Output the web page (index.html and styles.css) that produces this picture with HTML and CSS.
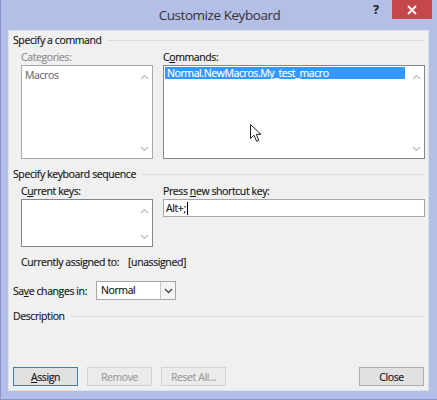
FILE: index.html
```html
<!DOCTYPE html>
<html>
<head>
<meta charset="utf-8">
<link rel="stylesheet" href="styles.css">
</head>
<body>
<div class="window">
  <div class="titlebar">
    <div class="title">Customize Keyboard</div>
    <div class="controls">
      <span class="help">?</span>
      <span class="close"><svg width="10" height="10" viewBox="0 0 10 10"><path d="M1 1L9 9M9 1L1 9" stroke="#fff" stroke-width="1.8"/></svg></span>
    </div>
  </div>
  <div class="panel">
    <div class="section-head"><span>Specify a command</span><i class="rule"></i></div>
    <div class="cmd-grid">
      <div class="col">
        <div class="label disabled">Categories:</div>
        <div class="listbox tall disabled-box">
          <div class="items"><div class="item gray">Macros</div></div>
          <div class="scroll"><svg class="arr" width="9" height="6" viewBox="0 0 9 6"><path d="M1 5L4.5 1.5L8 5" fill="none" stroke="#bdbdbd" stroke-width="1.2"/></svg><svg class="arr" width="9" height="6" viewBox="0 0 9 6"><path d="M1 1L4.5 4.5L8 1" fill="none" stroke="#bdbdbd" stroke-width="1.2"/></svg></div>
        </div>
      </div>
      <div class="col">
        <div class="label">C<u>o</u>mmands:</div>
        <div class="listbox tall">
          <div class="items"><div class="item selected">Normal.NewMacros.My_test_macro</div></div>
          <div class="scroll"><svg class="arr" width="9" height="6" viewBox="0 0 9 6"><path d="M1 5L4.5 1.5L8 5" fill="none" stroke="#bdbdbd" stroke-width="1.2"/></svg><svg class="arr" width="9" height="6" viewBox="0 0 9 6"><path d="M1 1L4.5 4.5L8 1" fill="none" stroke="#bdbdbd" stroke-width="1.2"/></svg></div>
          <svg class="cursor" width="13" height="19" viewBox="0 0 13 19"><path d="M0.5 0.5L0.5 14.5L4 11.2L6.6 17.3L8.8 16.3L6.3 10.3L11 10.3Z" fill="#fff" stroke="#222" stroke-width="1" stroke-linejoin="round"/></svg>
        </div>
      </div>
    </div>
    <div class="section-head second"><span>Specify keyboard sequence</span><i class="rule"></i></div>
    <div class="cmd-grid">
      <div class="col">
        <div class="label">C<u>u</u>rrent keys:</div>
        <div class="listbox short">
          <div class="items"></div>
          <div class="scroll"><svg class="arr" width="9" height="6" viewBox="0 0 9 6"><path d="M1 5L4.5 1.5L8 5" fill="none" stroke="#bdbdbd" stroke-width="1.2"/></svg><svg class="arr" width="9" height="6" viewBox="0 0 9 6"><path d="M1 1L4.5 4.5L8 1" fill="none" stroke="#bdbdbd" stroke-width="1.2"/></svg></div>
        </div>
      </div>
      <div class="col">
        <div class="label">Press <u>n</u>ew shortcut key:</div>
        <div class="textbox">Alt+;<span class="caret"></span></div>
      </div>
    </div>
    <div class="assigned"><span>Currently assigned to:</span><span>[unassigned]</span></div>
    <div class="save-row">
      <span class="save-label">Sa<u>v</u>e changes in:</span>
      <div class="combo"><span class="combo-text">Normal</span><span class="combo-btn"><svg width="9" height="6" viewBox="0 0 9 6"><path d="M1 1L4.5 4.5L8 1" fill="none" stroke="#444" stroke-width="1.3"/></svg></span></div>
    </div>
    <div class="section-head third"><span>Description</span><i class="rule"></i></div>
    <div class="spacer"></div>
    <div class="buttons">
      <button class="btn focus"><u>A</u>ssign</button>
      <button class="btn off">Remove</button>
      <button class="btn off">Reset All...</button>
      <span class="grow"></span>
      <button class="btn">Close</button>
    </div>
  </div>
</div>
</body>
</html>
```
FILE: styles.css
```css
* { box-sizing: border-box; }
html, body { margin: 0; padding: 0; }
body {
  width: 437px;
  height: 400px;
  overflow: hidden;
  font-family: "Open Sans", "Noto Sans", sans-serif;
  font-size: 10.5px;
  letter-spacing: -0.4px;
  color: #141414;
  -webkit-text-stroke: 0.15px currentColor;
  white-space: nowrap;
}
.window {
  width: 437px;
  height: 400px;
  background: #b3bfe7;
  border-left: 1px solid #8796cc;
  border-bottom: 1px solid #8796cc;
  display: flex;
  flex-direction: column;
}
.titlebar {
  height: 30px;
  display: flex;
  position: relative;
  justify-content: center;
}
.title {
  font-size: 13.5px;
  letter-spacing: -0.45px;
  color: #333;
  line-height: 30px;
  padding-left: 1px;
  -webkit-text-stroke: 0;
}
.controls {
  position: absolute;
  top: 0;
  right: 5px;
  display: flex;
  align-items: flex-start;
}
.help {
  font-weight: bold;
  font-size: 12px;
  color: #222;
  width: 24px;
  line-height: 20px;
  text-align: center;
  margin-right: 4px;
}
.close {
  width: 40px;
  height: 19px;
  background: #c7484b;
  display: flex;
  align-items: center;
  justify-content: center;
}
.panel {
  flex: 1;
  margin: 0 8px 8px 7px;
  background: #f0f0f0;
  border: 1px solid #dde1ef;
  padding: 1px 4px 0 4px;
  display: flex;
  flex-direction: column;
}
.section-head {
  display: flex;
  align-items: center;
  height: 16px;
  gap: 6px;
}
.section-head .rule {
  flex: 1;
  height: 1px;
  background: #dcdcdc;
}
.section-head.second { margin-top: 7px; }
.section-head.third { margin-top: 8px; }
.cmd-grid {
  display: grid;
  grid-template-columns: 132px 262px;
  column-gap: 10px;
  padding-left: 8px;
  margin-top: 2px;
}
.label {
  height: 15px;
  line-height: 15px;
}
.label.disabled { color: #8d8d8d; }
.listbox {
  position: relative;
  background: #fff;
  border: 1px solid #828790;
  display: flex;
}
.listbox.disabled-box { border-color: #a8a8a8; }
.listbox.tall { height: 94px; }
.listbox.short { height: 48px; }
.items { flex: 1; padding: 1px; }
.item { height: 12px; line-height: 12px; padding-left: 2px; }
.item.gray { color: #6d6d6d; padding-top: 2px; height: 14px; }
.item.selected {
  background: #3399ff;
  color: #fff;
  margin-right: 2px;
}
.scroll {
  width: 16px;
  display: flex;
  flex-direction: column;
  justify-content: space-between;
  align-items: center;
  padding: 8px 0 6px;
}
.arr { display: block; }
.cursor {
  position: absolute;
  left: 86px;
  top: 58px;
}
.textbox {
  height: 18px;
  background: #fff;
  border: 1px solid #a6a6a6;
  padding-left: 2px;
  line-height: 16px;
  display: flex;
  align-items: center;
}
.caret {
  display: inline-block;
  width: 1px;
  height: 13px;
  background: #000;
  margin-left: 1px;
}
.assigned {
  display: flex;
  gap: 9px;
  padding-left: 8px;
  margin-top: 8px;
  height: 15px;
  line-height: 15px;
}
.save-row {
  display: flex;
  align-items: center;
  margin-top: 11px;
  height: 19px;
}
.save-label { width: 83px; flex: none; }
.combo {
  width: 80px;
  height: 19px;
  border: 1px solid #a6a6a6;
  background: #fff;
  display: flex;
}
.combo-text { flex: 1; padding-left: 4px; line-height: 17px; }
.combo-btn {
  width: 15px;
  border-left: 1px solid #c8c8c8;
  background: #f4f4f4;
  display: flex;
  align-items: center;
  justify-content: center;
}
.spacer { flex: 1; }
.buttons {
  display: flex;
  gap: 9px;
  margin-bottom: 4px;
}
.grow { flex: 1; }
.btn {
  width: 65px;
  height: 19px;
  font-family: inherit;
  font-size: 10.5px;
  letter-spacing: -0.4px;
  color: #141414;
  -webkit-text-stroke: 0.15px currentColor;
  background: #e1e1e1;
  border: 1px solid #adadad;
  padding: 0;
  border-radius: 0;
}
.btn.focus { border-color: #3c7fb1; }
.btn.off { color: #9c9c9c; background: #ebebeb; border-color: #d3d3d3; }
```
